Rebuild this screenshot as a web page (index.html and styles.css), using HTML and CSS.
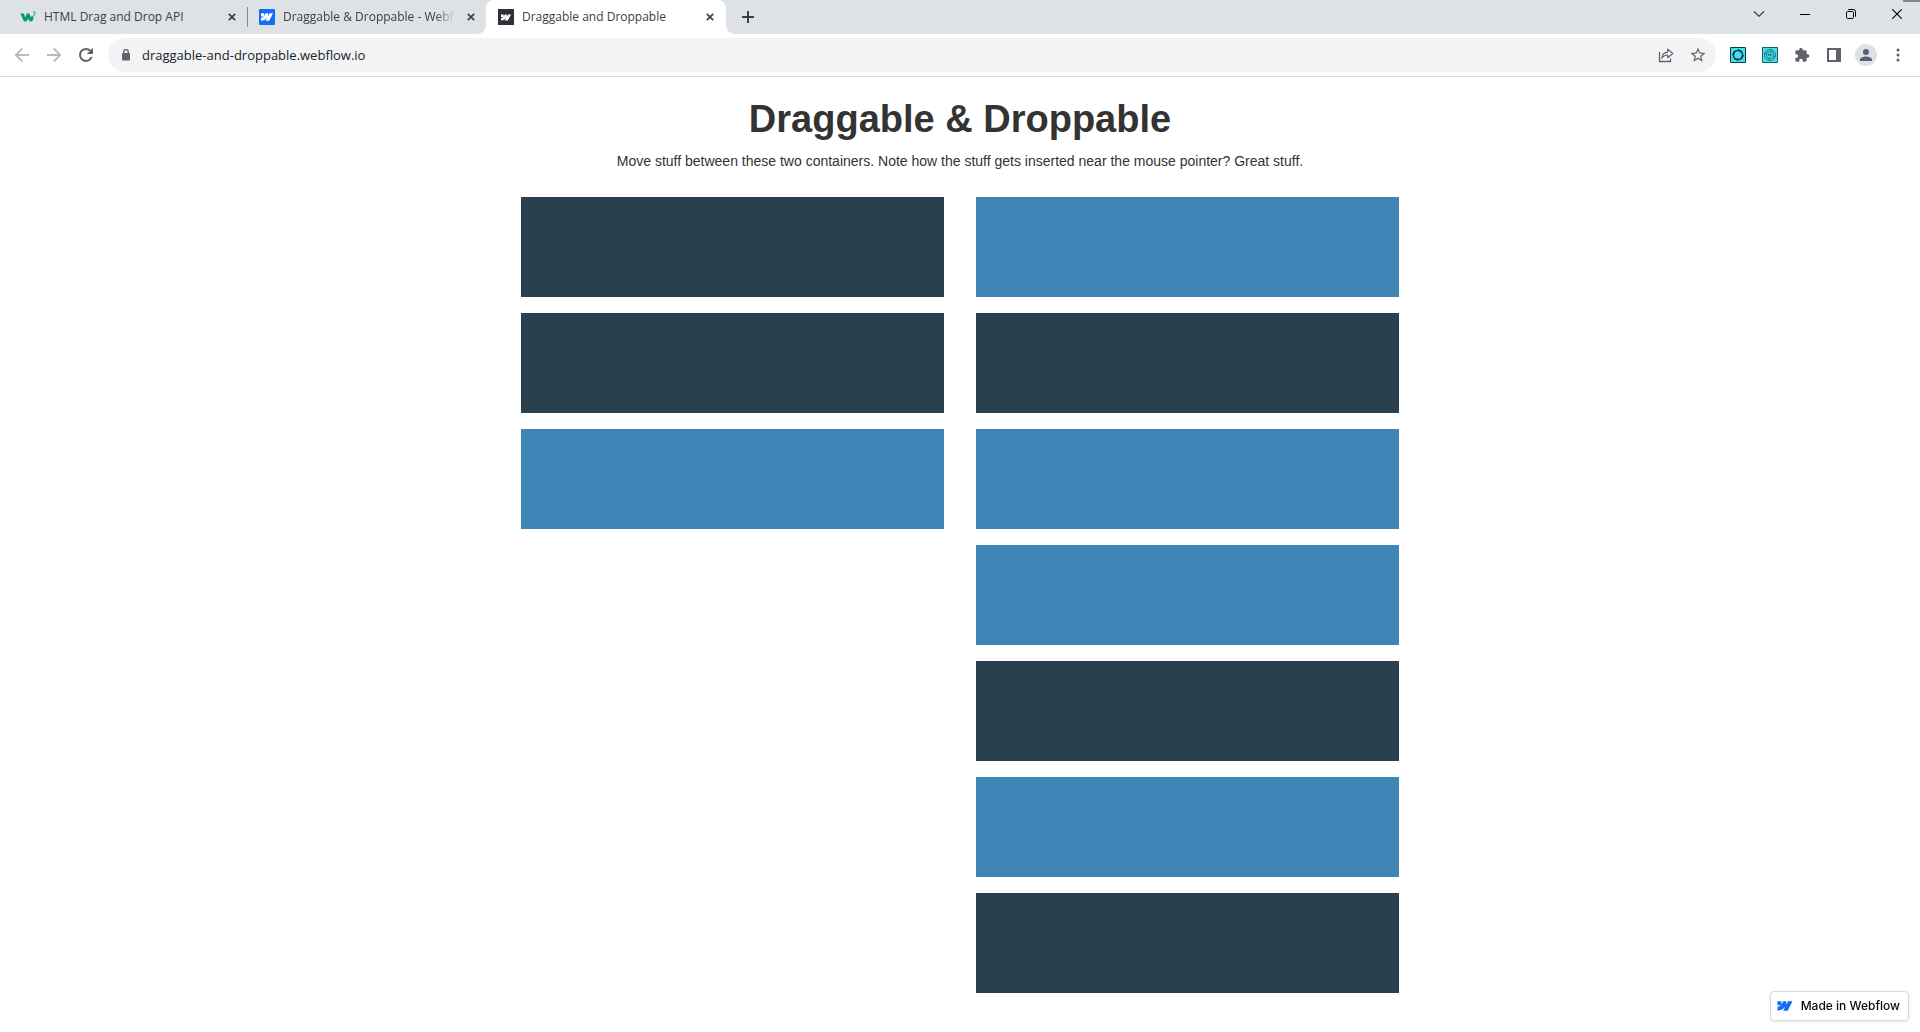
FILE: index.html
```html
<!DOCTYPE html>
<html lang="en">
<head>
<meta charset="utf-8">
<title>Draggable and Droppable</title>
<link rel="stylesheet" href="styles.css">
</head>
<body>
<svg class="defs" aria-hidden="true">
  <symbol id="webflow" viewBox="0 4 24 16"><path d="m24 4.515-7.658 14.97H9.149l3.205-6.204h-.144C9.566 16.713 5.621 18.973 0 19.485v-6.118s3.596-.213 5.71-2.435H0V4.515h6.417v5.278l.144-.001 2.622-5.277h4.854v5.244h.144l2.72-5.244H24Z" fill="currentColor"/></symbol>
  <symbol id="cross" viewBox="0 0 8 8"><path d="M.8.8l6.4 6.4M7.2.8L.8 7.2" stroke="currentColor" stroke-width="1.7" fill="none"/></symbol>
</svg>
<header class="browser">
  <div class="tabstrip">
    <div class="tab">
      <svg class="favicon" viewBox="0 0 16 16" aria-hidden="true"><path d="M.3 4.5h3.500l1.500 4 1.500-4h2.600l1.500 4 1-1.700 1.900 1.200c-.6 2.900-1.500 4.600-2.900 4.600-1.300 0-2-1-2.800-3.400-.7 2.300-1.500 3.400-2.700 3.400-1.300 0-2-.9-2.700-2.800z" fill="#089b68"/><path d="M13 3h2.200l-1.100 1.400c1.500.2 1.300 2-.1 2-.6 0-1-.2-1.200-.6" fill="none" stroke="#2bac7e" stroke-width=".9"/></svg>
      <span class="tab-title">HTML Drag and Drop API</span>
      <button class="tab-close" aria-label="Close tab"><svg width="8" height="8"><use href="#cross"/></svg></button>
    </div>
    <div class="tab divided">
      <span class="favicon site blue"><svg width="12" height="8"><use href="#webflow"/></svg></span>
      <span class="tab-title fade">Draggable &amp; Droppable - Webflow</span>
      <button class="tab-close" aria-label="Close tab"><svg width="8" height="8"><use href="#cross"/></svg></button>
    </div>
    <div class="tab active">
      <span class="favicon site dark"><svg width="10" height="7"><use href="#webflow"/></svg></span>
      <span class="tab-title">Draggable and Droppable</span>
      <button class="tab-close" aria-label="Close tab"><svg width="8" height="8"><use href="#cross"/></svg></button>
    </div>
    <button class="new-tab" aria-label="New tab"><svg width="12" height="12" viewBox="0 0 12 12"><path d="M6 0v12M0 6h12" stroke="#3c4043" stroke-width="2"/></svg></button>
    <div class="window-controls">
      <button aria-label="Search tabs"><svg width="12" height="8" viewBox="0 0 12 8"><path d="M1 1.3l5 5 5-5" fill="none" stroke="#222" stroke-width="1.1"/></svg></button>
      <button aria-label="Minimize"><svg width="10" height="10" viewBox="0 0 10 10"><path d="M0 5.5h10" stroke="#000"/></svg></button>
      <button aria-label="Restore"><svg width="10" height="10" viewBox="0 0 10 10"><g fill="none" stroke="#000"><rect x=".5" y="2.5" width="7" height="7" rx="1.2"/><path d="M2.3.5H7.5a2 2 0 0 1 2 2V7.7"/></g></svg></button>
      <button aria-label="Close"><svg width="10" height="10" viewBox="0 0 10 10"><path d="M.3.3l9.4 9.4M9.7.3L.3 9.7" stroke="#000" stroke-width="1.1"/></svg></button>
    </div>
    <span class="corner"></span>
  </div>
  <div class="toolbar">
    <button class="tool faded" aria-label="Back"><svg width="16" height="16" viewBox="0 0 16 16"><path d="M15 8H2M8.3 1.5L1.8 8l6.5 6.5" fill="none" stroke="currentColor" stroke-width="1.8"/></svg></button>
    <button class="tool faded" aria-label="Forward"><svg width="16" height="16" viewBox="0 0 16 16"><path d="M1 8h13M7.7 1.5L14.2 8l-6.5 6.5" fill="none" stroke="currentColor" stroke-width="1.8"/></svg></button>
    <button class="tool" aria-label="Reload"><svg width="16" height="16" viewBox="0 0 16 16"><path d="M13.600 10A6 6 0 1 1 12.400 3.900" fill="none" stroke="currentColor" stroke-width="2"/><path d="M15 .8V7H8.8z" fill="currentColor"/></svg></button>
    <div class="omnibox">
      <svg class="lock" width="10" height="12" viewBox="0 0 10 12" aria-hidden="true"><rect x="1" y="4" width="8" height="7.5" rx="1" fill="#5f6368"/><path d="M2.8 4.5V2.9a2.2 2.2 0 0 1 4.4 0v1.6" fill="none" stroke="#5f6368" stroke-width="1.3"/></svg>
      <input class="url" type="text" aria-label="Address" value="draggable-and-droppable.webflow.io">
      <button class="tool" aria-label="Share"><svg width="16" height="16" viewBox="0 0 16 16"><path d="M1.500 5v9.500h11v-3" fill="none" stroke="currentColor" stroke-width="1.3"/><path d="M3.8 11.300c.5-4 2.600-6 5.900-6.200V2.200l5 4.300-5 4.200V8c-2.500 0-4.400.9-5.900 3.300z" fill="none" stroke="currentColor" stroke-width="1.2" stroke-linejoin="round"/></svg></button>
      <button class="tool" aria-label="Bookmark"><svg width="18" height="18" viewBox="0 0 24 24"><path fill="currentColor" d="M22 9.240l-7.190-.62L12 2 9.190 8.630 2 9.240l5.460 4.730L5.820 21 12 17.270 18.180 21l-1.630-7.030L22 9.240zM12 15.400l-3.760 2.270 1-4.280-3.320-2.880 4.380-.38L12 6.100l1.710 4.040 4.380.38-3.320 2.880 1 4.280L12 15.400z"/></svg></button>
    </div>
    <button class="tool" aria-label="Extension"><svg width="16" height="16" viewBox="0 0 16 16"><path d="M.5.5h15v15H.5z" fill="#43e0ea" stroke="#123b49"/><circle cx="8" cy="8" r="4.600" fill="none" stroke="#0d3c4b" stroke-width="1.500"/><path d="M8 2.600l4 2.400M13.400 8l-2.400 4M8 13.400L4 11M2.600 8L5 4" stroke="#0d3c4b" stroke-width="1.500"/></svg></button>
    <button class="tool" aria-label="Extension"><svg width="16" height="16" viewBox="0 0 16 16"><path d="M.5.5h15v15H.5z" fill="#43e0ea" stroke="#1c5c6c"/><g fill="none" stroke="#17616f" stroke-width=".8"><circle cx="8" cy="8" r="5.500"/><circle cx="8" cy="8" r="3.600"/><path d="M6.500 8.300c.5 1.400 2.500.8 3-.8M6.300 8h3.200c0-2-2.800-2.200-3.200 0M2.600 7l2-1M8.500 2.500l1 2M13.400 9l-2 1M7.500 13.500l-1-2"/></g></svg></button>
    <button class="tool" aria-label="Extensions"><svg width="16" height="16" viewBox="0 0 24 24"><path fill="currentColor" d="M20.500 11H19V7c0-1.100-.9-2-2-2h-4V3.500a2.500 2.500 0 0 0-5 0V5H4c-1.100 0-1.990.9-1.990 2v3.800H3.500c1.490 0 2.700 1.210 2.700 2.700s-1.210 2.700-2.700 2.700H2V20c0 1.100.9 2 2 2h3.800v-1.500c0-1.490 1.210-2.700 2.700-2.700s2.700 1.210 2.700 2.700V22H17c1.100 0 2-.9 2-2v-4h1.500a2.500 2.500 0 0 0 0-5z"/></svg></button>
    <button class="tool" aria-label="Side panel"><svg width="14" height="14" viewBox="0 0 14 14"><path fill="currentColor" fill-rule="evenodd" d="M0 0h14v14H0zm2 2v10h7V2z"/></svg></button>
    <button class="tool avatar" aria-label="Profile"><svg width="22" height="22" viewBox="0 0 22 22"><circle cx="11" cy="11" r="11" fill="#dee1e6"/><g fill="#56627a"><circle cx="11" cy="8" r="3"/><path d="M5 17v-1.500c0-2 4-3 6-3s6 1 6 3V17z"/></g></svg></button>
    <button class="tool" aria-label="Menu"><svg width="4" height="14" viewBox="0 0 4 14"><g fill="currentColor"><circle cx="2" cy="2" r="1.500"/><circle cx="2" cy="7" r="1.500"/><circle cx="2" cy="12" r="1.500"/></g></svg></button>
  </div>
</header>
<main class="page">
  <h1>Draggable &amp; Droppable</h1>
  <p>Move stuff between these two containers. Note how the stuff gets inserted near the mouse pointer? Great stuff.</p>
  <div class="board">
    <div class="column">
      <div class="card" draggable="true"></div>
      <div class="card" draggable="true"></div>
      <div class="card light" draggable="true"></div>
    </div>
    <div class="column">
      <div class="card light" draggable="true"></div>
      <div class="card" draggable="true"></div>
      <div class="card light" draggable="true"></div>
      <div class="card light" draggable="true"></div>
      <div class="card" draggable="true"></div>
      <div class="card light" draggable="true"></div>
      <div class="card" draggable="true"></div>
    </div>
  </div>
</main>
<a class="badge" href="#"><svg width="16" height="10"><use href="#webflow"/></svg><span>Made in Webflow</span></a>
</body>
</html>
```
FILE: styles.css
```css
* { box-sizing: border-box; }

body {
  margin: 0;
  background: #fff;
  color: #333;
  font: 14px/20px "Liberation Sans", Arial, sans-serif;
}

button {
  display: flex;
  align-items: center;
  justify-content: center;
  padding: 0;
  border: 0;
  background: none;
  color: inherit;
}

svg { flex: none; }

.defs {
  position: absolute;
  width: 0;
  height: 0;
}

.browser {
  border-bottom: 1px solid #dadcdf;
  font-family: "Open Sans", "Noto Sans", sans-serif;
}

/* Tab strip */
.tabstrip {
  position: relative;
  display: flex;
  height: 34px;
  padding-left: 8px;
  background: #dee1e6;
}

.tab {
  position: relative;
  display: flex;
  align-items: center;
  width: 239px;
  padding: 0 7px 0 12px;
  color: #3c4043;
  font-size: 12px;
}

.tab.divided::before {
  content: "";
  position: absolute;
  left: 0;
  top: 7px;
  width: 1px;
  height: 20px;
  background: #85888d;
}

.tab.active {
  width: 240px;
  padding-right: 8px;
  border-radius: 8px 8px 0 0;
  background: #fff;
}

.tab.active::before,
.tab.active::after {
  content: "";
  position: absolute;
  bottom: 0;
  width: 8px;
  height: 8px;
}

.tab.active::before {
  right: 100%;
  background: radial-gradient(circle at 0 0, transparent 7px, #fff 8px);
}

.tab.active::after {
  left: 100%;
  background: radial-gradient(circle at 100% 0, transparent 7px, #fff 8px);
}

.favicon {
  flex: none;
  width: 16px;
  height: 16px;
  margin-right: 8px;
}

.site {
  display: flex;
  align-items: center;
  justify-content: center;
  color: #fff;
}

.blue { border-radius: 1px; background: #146ef5; }
.dark { background: #2b3137; }

.tab-title {
  flex: 1;
  min-width: 0;
  overflow: hidden;
  white-space: nowrap;
}

.fade {
  -webkit-mask-image: linear-gradient(to left, transparent, #000 20px);
  mask-image: linear-gradient(to left, transparent, #000 20px);
}

.tab-close {
  width: 16px;
  height: 16px;
  margin-left: 8px;
}

.new-tab {
  width: 28px;
  margin-left: 8px;
}

.window-controls {
  display: flex;
  height: 28px;
  margin-left: auto;
}

.window-controls button { width: 46px; }

.corner {
  position: absolute;
  top: 0;
  right: 0;
  width: 17px;
  height: 2px;
  background: #85868a;
}

/* Toolbar */
.toolbar {
  display: flex;
  align-items: center;
  height: 42px;
  padding: 0 6px;
  color: #5f6368;
}

.tool {
  width: 32px;
  height: 32px;
}

.faded { color: #bababc; }

.omnibox {
  display: flex;
  flex: 1;
  align-items: center;
  height: 34px;
  margin: 0 6px;
  padding: 0 2px 0 13px;
  border-radius: 17px;
  background: #f1f3f4;
}

.url {
  flex: 1;
  min-width: 0;
  margin-left: 11px;
  padding: 0;
  border: 0;
  outline: 0;
  background: none;
  color: #202124;
  font: 13px/20px "Open Sans", "Noto Sans", sans-serif;
}

/* Page */
.page {
  max-width: 878px;
  margin: 0 auto;
}

h1 {
  margin: 20px 0 10px;
  font-size: 38px;
  line-height: 44px;
  text-align: center;
}

p {
  margin: 0;
  text-align: center;
}

.board {
  display: grid;
  grid-template-columns: 1fr 1fr;
  gap: 32px;
  margin-top: 26px;
}

.column {
  display: flex;
  flex-direction: column;
  gap: 16px;
}

.card {
  height: 100px;
  background: #2a404f;
}

.card.light { background: #3e84b5; }

.badge {
  position: fixed;
  right: 11px;
  bottom: 11px;
  display: flex;
  align-items: center;
  gap: 8px;
  padding: 4px 8px 4px 6px;
  border: 1px solid #d9d9d9;
  border-radius: 4px;
  background: #fff;
  box-shadow: 0 1px 3px rgba(0, 0, 0, 0.1);
  color: #146ef5;
  font: 500 12px/20px Inter, sans-serif;
  text-decoration: none;
}

.badge span { color: #080808; }
```
